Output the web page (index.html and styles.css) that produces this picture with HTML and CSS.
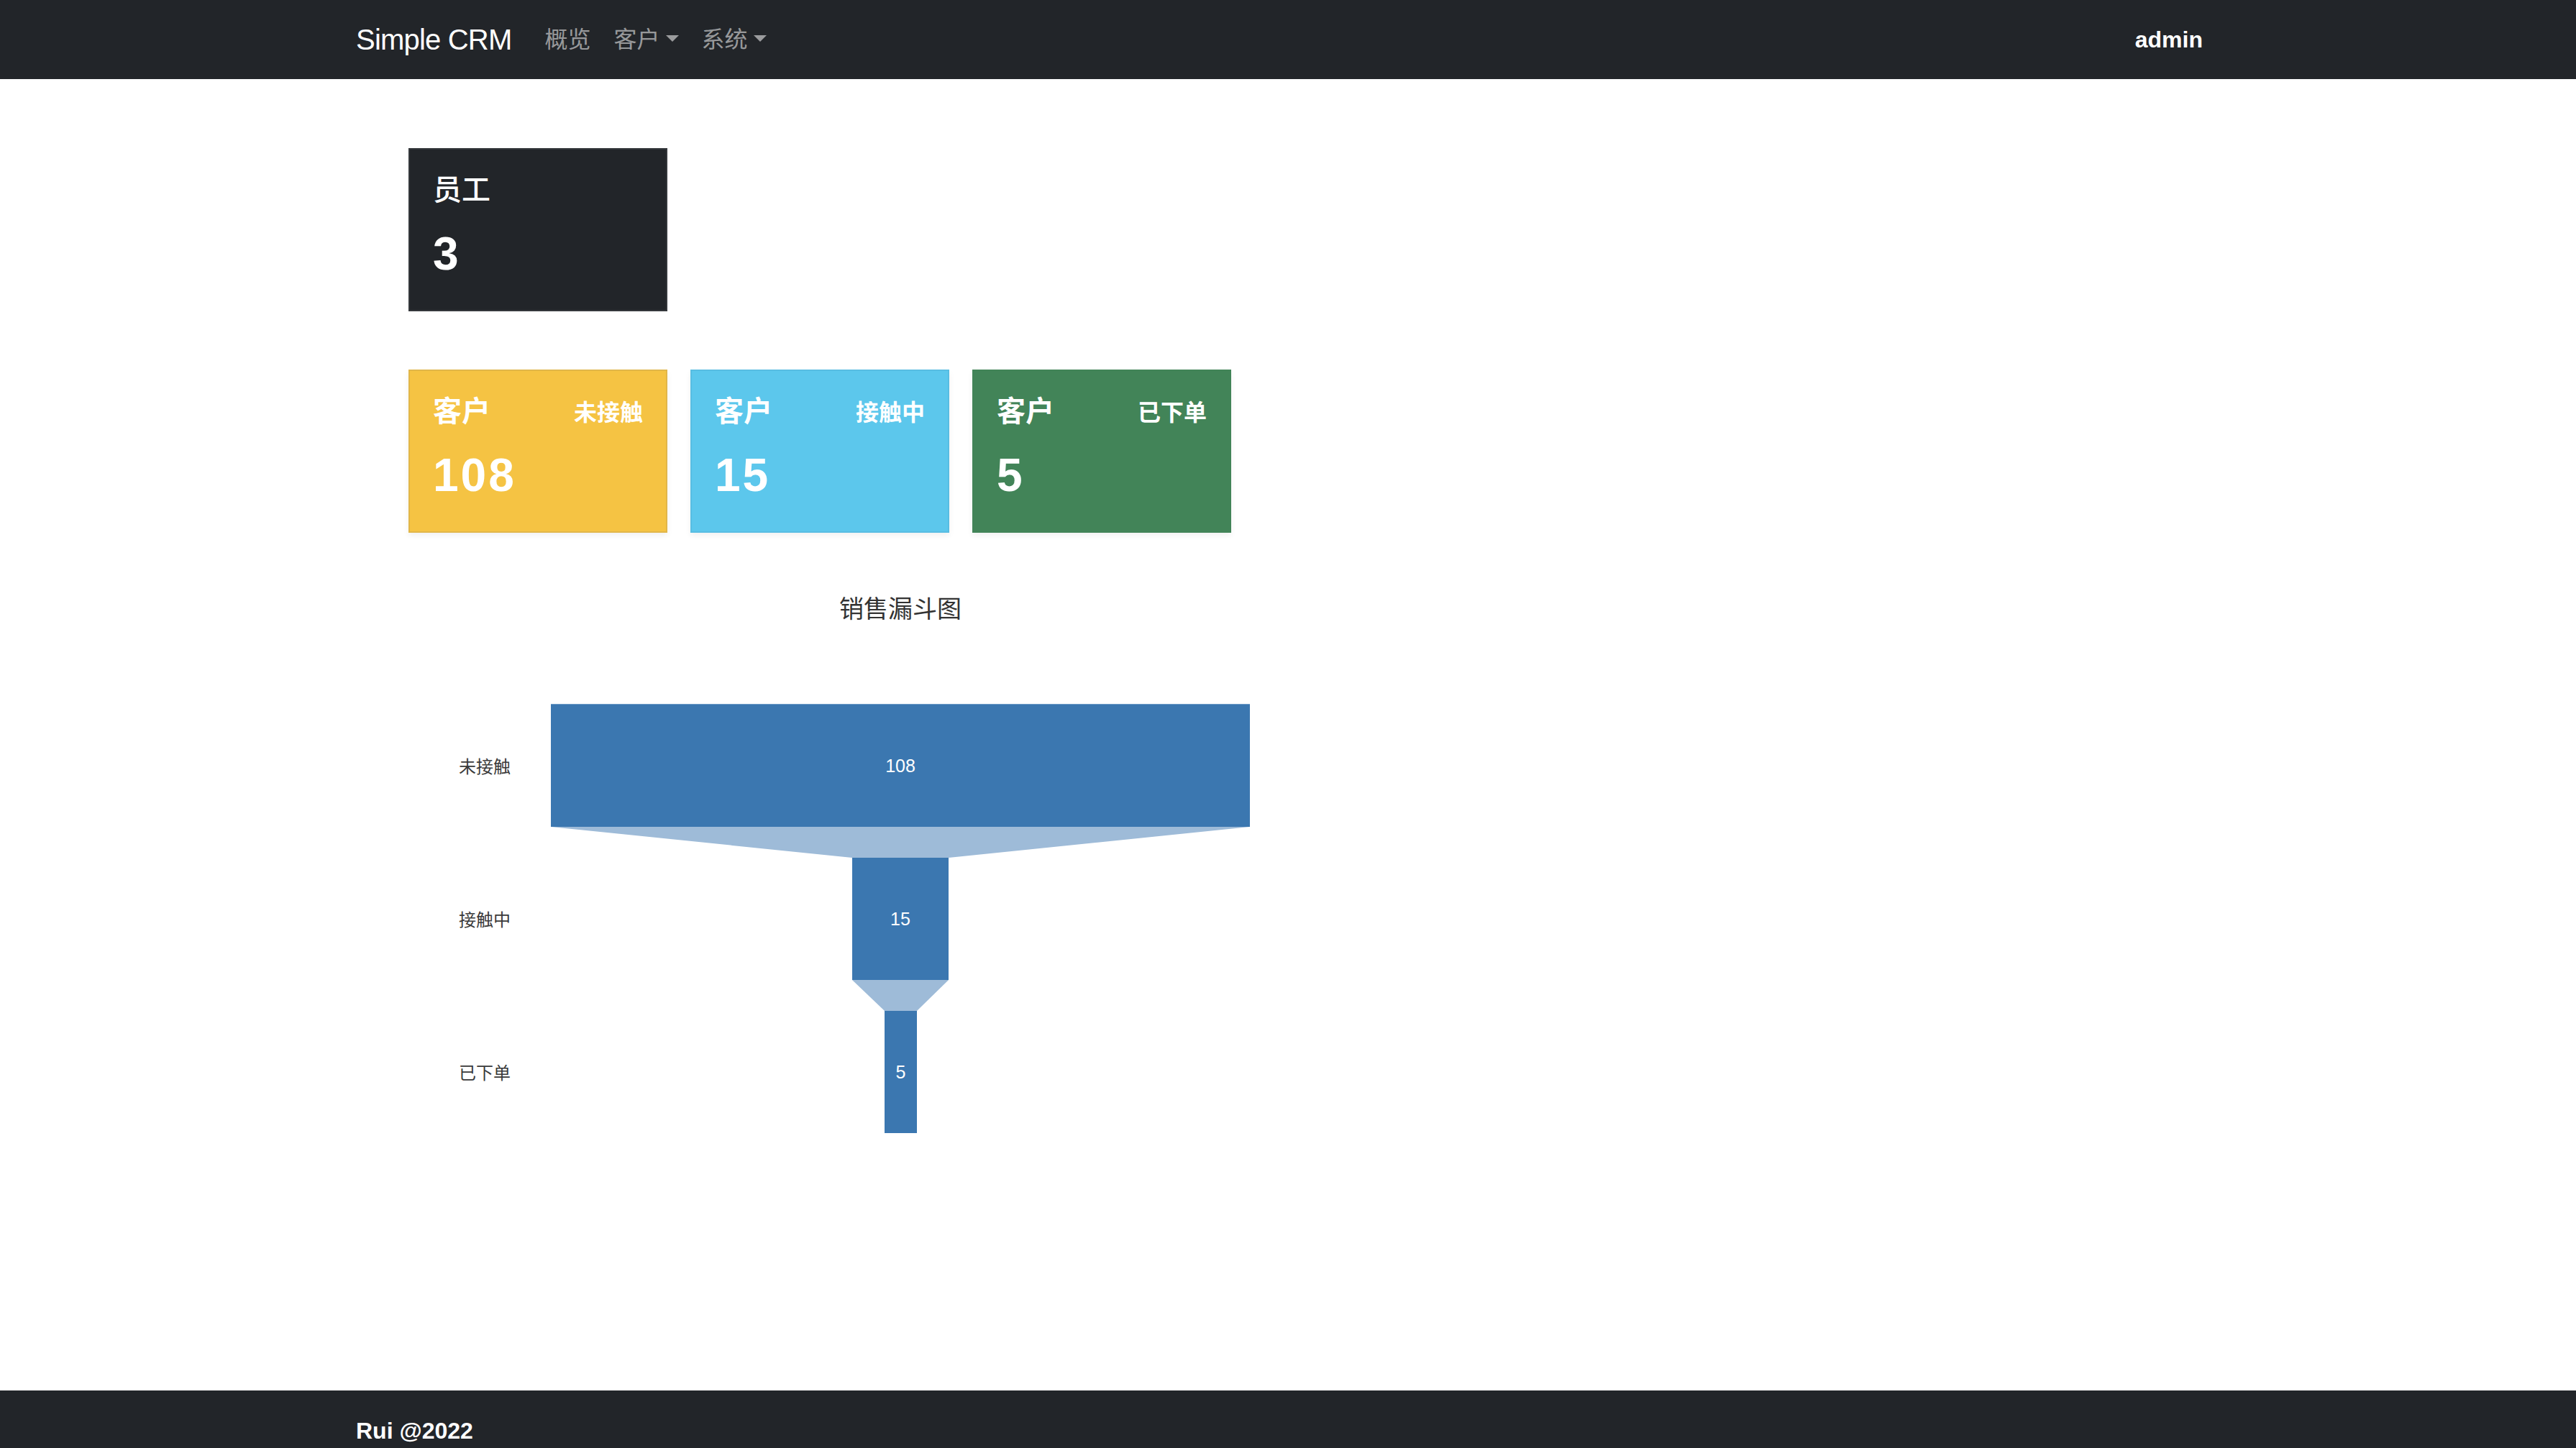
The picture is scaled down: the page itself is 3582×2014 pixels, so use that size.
FILE: index.html
```html
<!DOCTYPE html>
<html lang="zh-CN">
<head>
<meta charset="utf-8">
<title>Simple CRM</title>
<link rel="stylesheet" href="styles.css">
</head>
<body>
<nav class="navbar">
  <div class="container nav-inner">
    <a class="brand" href="#">Simple CRM</a>
    <ul class="nav-links">
      <li><a class="nav-link" href="#">概览</a></li>
      <li><a class="nav-link dropdown" href="#">客户</a></li>
      <li><a class="nav-link dropdown" href="#">系统</a></li>
    </ul>
    <a class="nav-user" href="#">admin</a>
  </div>
</nav>

<main class="container main">
  <div class="stats">
    <div class="card-row first">
      <div class="card card-dark">
        <div class="card-head"><span class="card-title">员工</span></div>
        <div class="card-num">3</div>
      </div>
    </div>
    <div class="card-row">
      <div class="card card-warning">
        <div class="card-head"><span class="card-title strong">客户</span><span class="card-tag">未接触</span></div>
        <div class="card-num">108</div>
      </div>
      <div class="card card-info">
        <div class="card-head"><span class="card-title strong">客户</span><span class="card-tag">接触中</span></div>
        <div class="card-num">15</div>
      </div>
      <div class="card card-success">
        <div class="card-head"><span class="card-title strong">客户</span><span class="card-tag">已下单</span></div>
        <div class="card-num">5</div>
      </div>
    </div>
  </div>

  <div class="chart">
    <svg class="chart-svg" width="1368" height="1164" viewBox="0 0 1368 1164" xmlns="http://www.w3.org/2000/svg">
      <text class="chart-title" x="684" y="74" text-anchor="middle" dominant-baseline="central">销售漏斗图</text>

      <polygon class="funnel-link" points="198,380 1170,380 751,423 617,423"/>
      <polygon class="funnel-link" points="617,593 751,593 707,636 662,636"/>

      <rect class="funnel-bar" x="198" y="209" width="972" height="171"/>
      <line class="funnel-top" x1="198" y1="209.5" x2="1170" y2="209.5"/>
      <rect class="funnel-bar" x="617" y="423" width="134" height="170"/>
      <rect class="funnel-bar" x="662" y="636" width="45" height="170"/>

      <text class="funnel-value" x="684" y="295" text-anchor="middle" dominant-baseline="central">108</text>
      <text class="funnel-value" x="684" y="508" text-anchor="middle" dominant-baseline="central">15</text>
      <text class="funnel-value" x="684.5" y="721" text-anchor="middle" dominant-baseline="central">5</text>

      <text class="funnel-label" x="70" y="294" dominant-baseline="central">未接触</text>
      <text class="funnel-label" x="70" y="507" dominant-baseline="central">接触中</text>
      <text class="funnel-label" x="70" y="720" dominant-baseline="central">已下单</text>
    </svg>
  </div>
</main>

<footer class="footer">
  <div class="container footer-inner">Rui @2022</div>
</footer>
</body>
</html>
```

FILE: styles.css
```css
* {
  box-sizing: border-box;
}

html, body {
  margin: 0;
  padding: 0;
}

body {
  font-family: "Liberation Sans", "Noto Sans CJK SC", sans-serif;
  font-size: 32px;
  line-height: 1.5;
  color: #212529;
  background: #ffffff;
}

a {
  text-decoration: none;
}

.container {
  width: 100%;
  max-width: 2640px;
  margin: 0 auto;
  padding: 0 24px;
}

/* Navbar */
.navbar {
  background: #222529;
  height: 110px;
}

.nav-inner {
  display: flex;
  align-items: center;
  height: 110px;
}

.brand {
  color: #ffffff;
  font-size: 40px;
  line-height: 60px;
  margin-right: 30px;
  letter-spacing: -0.8px;
}

.nav-links {
  list-style: none;
  display: flex;
  margin: 0;
  padding: 0;
  flex: 1;
}

.nav-link {
  display: block;
  padding: 16px;
  color: rgba(255, 255, 255, 0.55);
  font-size: 32px;
  line-height: 48px;
}

.dropdown::after {
  content: "";
  display: inline-block;
  margin-left: 8px;
  vertical-align: 8px;
  border-top: 9.6px solid;
  border-right: 9.6px solid transparent;
  border-left: 9.6px solid transparent;
  border-bottom: 0;
}

.nav-user {
  color: #ffffff;
  font-weight: 700;
  font-size: 32px;
  line-height: 48px;
  padding: 16px 24px 16px 16px;
}

/* Main */
.main {
  padding-top: 96px;
}

.stats {
  padding-left: 73px;
}

.card-row {
  display: flex;
  gap: 32px;
}

.card-row.first {
  margin-bottom: 81px;
}

.card {
  width: 360px;
  padding: 32px;
  border: 2px solid transparent;
  color: #ffffff;
  box-shadow: 0 4px 8px rgba(0, 0, 0, 0.06);
}

.card-dark {
  background: #222529;
  border-color: #34373b;
  box-shadow: none;
}

.card-warning {
  background: #f5c343;
  border-color: #e1b649;
}

.card-info {
  background: #5cc7ec;
  border-color: #58bde2;
}

.card-success {
  background: #428458;
  border-color: #428458;
}

.card-head {
  display: flex;
  justify-content: space-between;
  align-items: center;
  height: 48px;
  margin-bottom: 27px;
}

.card-title {
  font-size: 40px;
  line-height: 48px;
  font-weight: 500;
}

.card-title.strong {
  font-weight: 700;
}

.card-tag {
  font-size: 32px;
  line-height: 48px;
  font-weight: 700;
  position: relative;
  top: 2px;
}

.card-num {
  font-size: 64px;
  line-height: 77px;
  font-weight: 700;
  letter-spacing: 3px;
  margin-bottom: 7px;
}

/* Chart */
.chart {
  margin-top: 29px;
  padding-left: 73px;
  height: 1164px;
}

.chart-svg {
  display: block;
}

.chart-title {
  font-family: "Noto Sans CJK SC", sans-serif;
  font-size: 34px;
  font-weight: 400;
  fill: #333333;
}

.funnel-bar {
  fill: #3b77b0;
}

.funnel-top {
  stroke: #6f9cc8;
  stroke-width: 1;
}

.funnel-link {
  fill: #9ebbd8;
}

.funnel-value {
  font-family: "Liberation Sans", sans-serif;
  font-size: 25px;
  fill: #ffffff;
}

.funnel-label {
  font-family: "Noto Sans CJK SC", sans-serif;
  font-size: 24px;
  fill: #3a3a3a;
}

/* Footer */
.footer {
  background: #222529;
  padding: 32px 0;
}

.footer-inner {
  color: #ffffff;
  font-weight: 700;
  font-size: 32px;
  line-height: 48px;
}
```
